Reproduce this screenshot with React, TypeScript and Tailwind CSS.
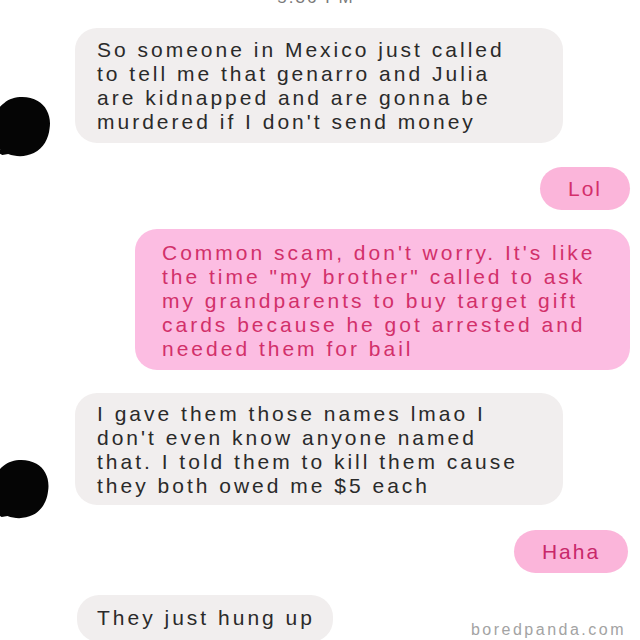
import React from "react";

const font = { fontFamily: '"Liberation Sans", Arial, sans-serif' };

function Blob({ className }: { className?: string }) {
  // scribbled-out avatar
  return (
    <svg viewBox="0 0 60 64" className={className}>
      <path
        d="M12 8 C20 1 36 0 46 6 C55 11 60 22 58 34 C57 44 52 54 42 59 C34 63 24 63 16 60 L10 61 L5 58 L8 55 C2 48 0 38 1 28 C2 20 6 12 12 8 Z"
        fill="#050505"
      />
    </svg>
  );
}

function Lines({ lines }: { lines: string[] }) {
  return (
    <>
      {lines.map((l, i) => (
        <div key={i} className="whitespace-nowrap">
          {l}
        </div>
      ))}
    </>
  );
}

export default function App() {
  return (
    <div
      className="w-[640px] h-[640px] overflow-hidden bg-white flex flex-col"
      style={font}
    >
      {/* timestamp, cut off at top */}
      <div className="-mt-[12px] h-[20px] text-center text-[17px] leading-[20px] tracking-[2px] text-[#7a7a7a] pr-[8px]">
        5:36 PM
      </div>

      {/* incoming 1 */}
      <div className="flex items-start mt-[20px]">
        <Blob className="w-[60px] h-[63px] -ml-[8px] mt-[67px] shrink-0" />
        <div className="ml-[23px] w-[488px] rounded-[22px] bg-[#f1eeee] pl-[22px] pt-[10px] pb-[9px] text-[21px] leading-[24px] tracking-[3px] text-[#2a2a2a]">
          <Lines
            lines={[
              "So someone in Mexico just called",
              "to tell me that genarro and Julia",
              "are kidnapped and are gonna be",
              "murdered if I don't send money",
            ]}
          />
        </div>
      </div>

      {/* outgoing Lol */}
      <div className="flex justify-end pr-[10px] mt-[9px]">
        <div className="w-[90px] h-[43px] rounded-full bg-[#fbb5da] flex items-center justify-center text-[21px] tracking-[2px] text-[#d42f6a]">
          Lol
        </div>
      </div>

      {/* outgoing long */}
      <div className="flex justify-end pr-[10px] mt-[19px]">
        <div className="w-[495px] rounded-[22px] bg-[#fcbde2] pl-[27px] pt-[12px] pb-[9px] text-[21px] leading-[24px] tracking-[3px] text-[#d2306a]">
          <Lines
            lines={[
              "Common scam, don't worry. It's like",
              'the time "my brother" called to ask',
              "my grandparents to buy target gift",
              "cards because he got arrested and",
              "needed them for bail",
            ]}
          />
        </div>
      </div>

      {/* incoming 2 */}
      <div className="flex items-start mt-[23px]">
        <Blob className="w-[58px] h-[62px] -ml-[8px] mt-[65px] shrink-0" />
        <div className="ml-[25px] w-[488px] rounded-[22px] bg-[#f1eeee] pl-[22px] pt-[9px] pb-[7px] text-[21px] leading-[24px] tracking-[3px] text-[#2a2a2a]">
          <Lines
            lines={[
              "I gave them those names lmao I",
              "don't even know anyone named",
              "that. I told them to kill them cause",
              "they both owed me $5 each",
            ]}
          />
        </div>
      </div>

      {/* outgoing Haha */}
      <div className="flex justify-end pr-[12px] mt-[10px]">
        <div className="w-[114px] h-[43px] rounded-full bg-[#fbb5da] flex items-center justify-center text-[21px] tracking-[2px] text-[#c8286a]">
          Haha
        </div>
      </div>

      {/* incoming 3 + watermark */}
      <div className="flex justify-between items-start mt-[22px] pl-[77px] pr-[14px]">
        <div className="w-[256px] rounded-[22px] bg-[#f1eeee] pl-[20px] pt-[11px] pb-[12px] text-[21px] leading-[24px] tracking-[3px] text-[#2a2a2a]">
          They just hung up
        </div>
        <div className="mt-[26px] text-[16px] leading-[18px] tracking-[2.5px] text-[#a3a3a3]">
          boredpanda.com
        </div>
      </div>
    </div>
  );
}
